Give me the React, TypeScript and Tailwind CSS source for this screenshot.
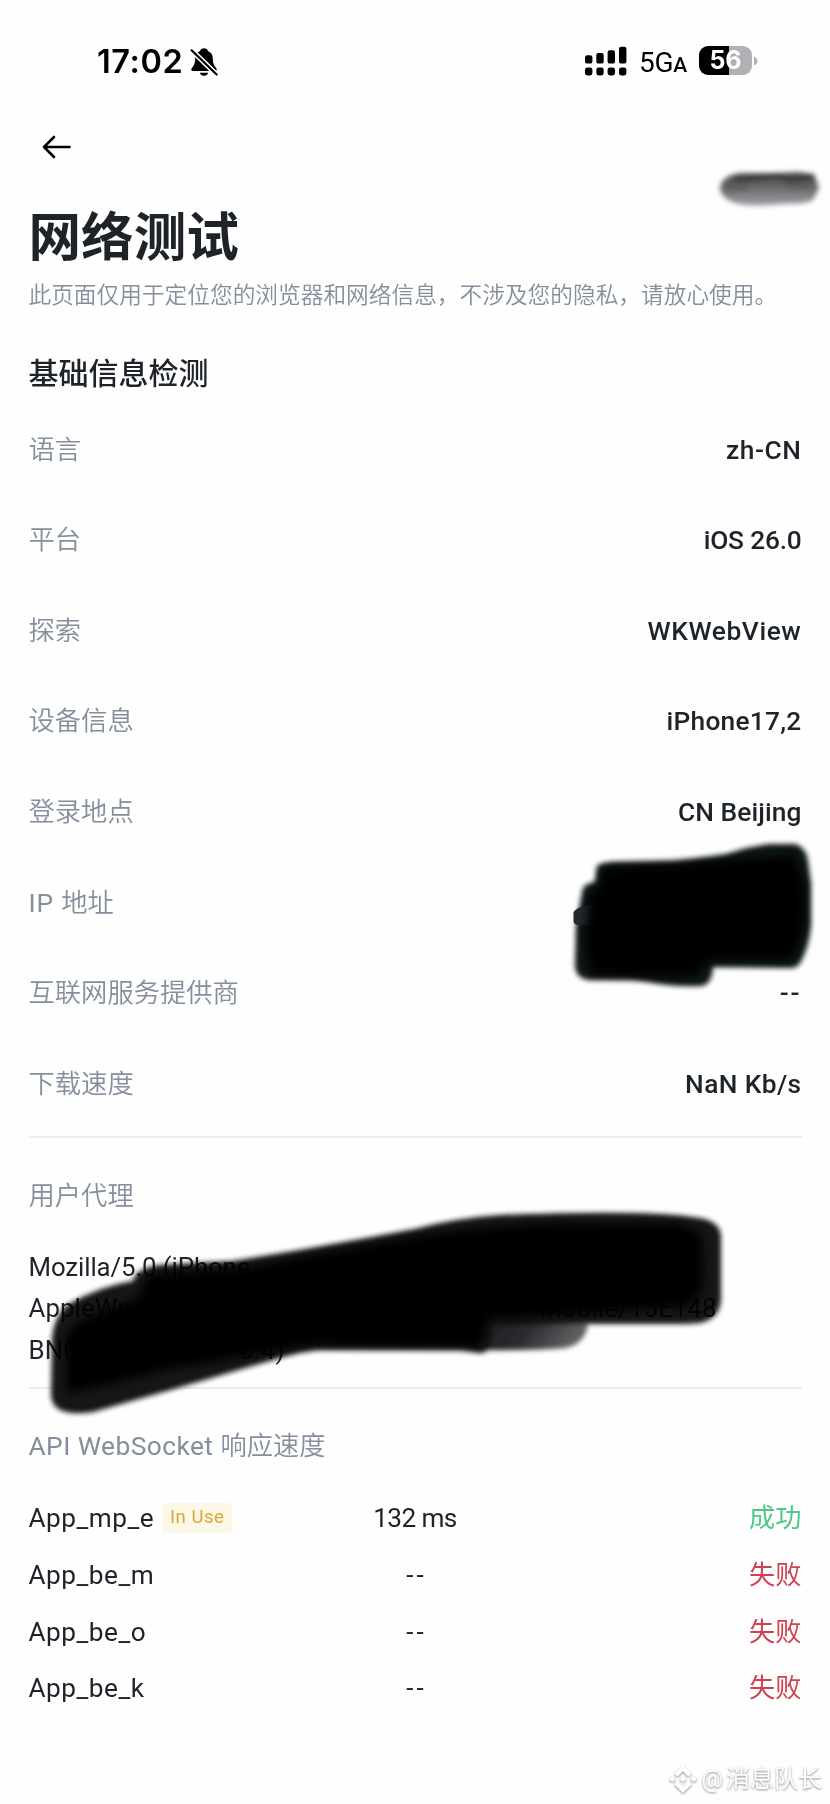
import React from 'react';
import { SiBinance } from 'react-icons/si';

const info = [
  { label: '语言', value: 'zh-CN', tracking: 'tracking-[0.6px]' },
  { label: '平台', value: 'iOS 26.0', tracking: 'tracking-[-0.2px]' },
  { label: '探索', value: 'WKWebView', tracking: 'tracking-[0.6px]' },
  { label: '设备信息', value: 'iPhone17,2', tracking: 'tracking-[0.25px]' },
  { label: '登录地点', value: 'CN Beijing', tracking: 'tracking-[0.1px]' },
  { label: 'IP 地址', value: '', tracking: '' },
  { label: '互联网服务提供商', value: '--', tracking: 'tracking-[2px]' },
  { label: '下载速度', value: 'NaN Kb/s', tracking: 'tracking-[0.4px]' },
];

const sockets = [
  { name: 'App_mp_e', time: '132 ms', ok: true, inUse: true },
  { name: 'App_be_m', time: '--', ok: false, inUse: false },
  { name: 'App_be_o', time: '--', ok: false, inUse: false },
  { name: 'App_be_k', time: '--', ok: false, inUse: false },
];

function SilentBell() {
  return (
    <svg width="28" height="30" viewBox="0 0 28 30" className="ml-[7px] mt-[3px]">
      <path d="M14 1.200c-1.900 0-3.500 1.100-4 2.700-2.900 1.300-4.800 3.900-4.800 7.100 0 5.400-1.200 7.500-3 9.400C.800 21.900.900 24 2.800 24h22.400c1.900 0 2-2.100.6-3.600-1.800-1.900-3-4-3-9.400 0-3.200-1.900-5.800-4.800-7.100-.5-1.600-2.100-2.700-4-2.700z" />
      <path d="M9.800 25.800h8.400c-.5 1.900-2.100 3-4.200 3s-3.700-1.100-4.200-3z" />
      <path d="M1.500 3.200l25 24.300" stroke="#fefefe" strokeWidth="5.200" />
      <path d="M1.600 3.300l25 24.200" stroke="#000" strokeWidth="2.200" strokeLinecap="round" />
    </svg>
  );
}

function Signal() {
  return (
    <svg width="42" height="30" viewBox="0 0 42 30">
      <rect x="0" y="9.200" width="7.400" height="8.400" rx="2.200" />
      <rect x="11.300" y="7" width="7.400" height="10.600" rx="2.200" />
      <rect x="22.600" y="4.200" width="7.400" height="13.400" rx="2.200" />
      <rect x="34" y="0.800" width="7.400" height="16.800" rx="2.200" />
      <rect x="0" y="21.400" width="7.400" height="8" rx="2.400" />
      <rect x="11.300" y="21.400" width="7.400" height="8" rx="2.400" />
      <rect x="22.600" y="21.400" width="7.400" height="8" rx="2.400" />
      <rect x="34" y="21.400" width="7.400" height="8" rx="2.400" />
    </svg>
  );
}

// marker strokes that hide the private values
function Redactions() {
  return (
    <svg className="absolute inset-0 pointer-events-none mix-blend-multiply" width="830" height="1804" viewBox="0 0 830 1804">
      <defs>
        <filter id="soft" x="-10%" y="-20%" width="120%" height="140%">
          <feGaussianBlur stdDeviation="2.800" />
        </filter>
        <filter id="softer" x="-10%" y="-20%" width="120%" height="140%">
          <feGaussianBlur stdDeviation="5" />
        </filter>
        <linearGradient id="smudge" x1="0" y1="0" x2="0" y2="1">
          <stop offset="0" stopColor="#4a4b4d" />
          <stop offset="0.4" stopColor="#626365" />
          <stop offset="0.7" stopColor="#828385" />
          <stop offset="1" stopColor="#a0a2a7" />
        </linearGradient>
        <linearGradient id="lobe" x1="0" y1="0" x2="1" y2="0.300">
          <stop offset="0" stopColor="#17181c" />
          <stop offset="0.600" stopColor="#2a2b2f" />
          <stop offset="1" stopColor="#5d5e60" />
        </linearGradient>
      </defs>

      <g filter="url(#soft)">
        <path fill="url(#smudge)" d="M720 189C720 179 730 174 742 173L775 173L798 172L814 174L819 188L813 200C806 205 790 203 770 205C745 207 723 204 720 189Z" />
        <path fill="none" stroke="#333436" strokeWidth="4.500" strokeLinecap="round" d="M736 180L760 178L778 176L788 180L811 178" />
        <path fill="none" stroke="#5a5b5d" strokeWidth="6" strokeLinecap="round" d="M727 188L745 188M790 186L808 187" />
      </g>

      <g filter="url(#soft)">
        <path fill="#111317" d="M597 866Q601 863 611 862L673 861Q705 858 727 854Q750 846 770 844L796 844Q807 849 808 861L811 884L811 925Q809 948 800 963Q797 968 790 968L713 967Q712 984 702 986Q680 987 660 984Q646 981 633 980L590 980Q576 979 575 966L576 925L583 888Q587 883 595 882Z" />
      </g>
      <path fill="#25282d" d="M600 904Q580 904 573.500 912L573.500 921Q574 925 578 925L600 925Z" />
      <g filter="url(#softer)">
        <path fill="#000" d="M603 868L680 864L740 859L795 855L804 885L804 925L793 960L708 960L697 976L650 977L590 974L585 935L590 893L600 888Z" />
      </g>

      <g filter="url(#soft)">
        <path fill="url(#lobe)" d="M470 1305L588 1315L588 1324Q585 1344 565 1348Q530 1351 480 1350Z" />
        <path fill="#121418" d="M51 1395L52 1337Q55 1314 69 1304Q100 1286 133 1281Q136 1268 160 1265L233 1261L300 1250L367 1238L415 1229Q455 1218 500 1215Q580 1212 633 1213Q680 1214 705 1219Q721 1224 721 1237L721 1299Q720 1319 700 1323Q690 1324 680 1324L590 1324L492 1326Q495 1352 480 1353Q470 1351 460 1350L317 1350Q300 1352 283 1357L167 1391L93 1412Q52 1418 51 1395Z" />
      </g>
      <g filter="url(#softer)">
        <path fill="#000" d="M67 1394L66 1335Q75 1322 92 1316L136 1300L148 1275L240 1269L340 1250L420 1236Q480 1226 560 1223L680 1224L702 1234L703 1290L690 1306L590 1313L488 1320L482 1347L310 1345L165 1370Z" />
      </g>
    </svg>
  );
}

export default function App() {
  return (
    <div className="relative w-[830px] h-[1804px] overflow-hidden bg-[#fefefe] text-[#1e2329] whitespace-nowrap font-['Roboto','Noto_Sans_CJK_SC',sans-serif]">
      <div className="h-[120px] pl-[97px] flex items-center text-black">
        <span className="w-[86px] mt-[5px] font-['Inter',sans-serif] text-[32.500px] font-semibold leading-none tracking-[0.6px]">17:02</span>
        <SilentBell />
        <div className="ml-auto pr-[72px] mt-px flex items-center">
          <Signal />
          <div className="w-[46px] ml-[12px] mt-[4px] flex items-baseline leading-none">
            <span className="text-[28px] font-[450] tracking-[-0.3px]">5G</span>
            <span className="text-[21px] font-medium">A</span>
          </div>
          <div className="ml-[14px] w-[53px] h-[29px] rounded-[9px] bg-[linear-gradient(to_right,#000_57%,#b0b0b5_57%)] flex items-center justify-center font-['Inter',sans-serif] text-[25px] font-bold leading-none text-white">
            56
          </div>
          <svg width="4" height="10" viewBox="0 0 4 10" className="ml-[2px]">
            <path d="M0 0.500C2 1.200 3.400 2.800 3.400 5S2 8.800 0 9.500Z" fill="#b0b0b5" />
          </svg>
        </div>
      </div>

      <div className="h-[54px] pl-[42px] flex items-center">
        <svg width="30" height="24" viewBox="0 0 30 24" fill="none" stroke="#000" strokeWidth="2.600" strokeLinecap="round" strokeLinejoin="round">
          <path d="M27.500 12H2M12 2L2 12L12 22" />
        </svg>
      </div>

      <main className="px-[28.500px]">
        <h1 className="mt-[30px] h-[68px] leading-[68px] text-[52.600px] font-bold">网络测试</h1>
        <p className="mt-[8px] h-[32px] leading-[32px] text-[22.700px] font-[350] text-[#848e9c]">
          此页面仅用于定位您的浏览器和网络信息，不涉及您的隐私，请放心使用。
        </p>
        <h2 className="mt-[42px] h-[40px] leading-[40px] text-[30px] font-medium">基础信息检测</h2>

        <div className="mt-[11px]">
          {info.map((row) => (
            <div key={row.label} className="h-[90.600px] flex items-center justify-between text-[26.300px]">
              {row.label === 'IP 地址' ? (
                <span className="font-[350] text-[#848e9c]">
                  <span className="font-normal tracking-[0.8px]">IP </span>地址
                </span>
              ) : (
                <span className="font-[350] text-[#848e9c]">{row.label}</span>
              )}
              <span className={`font-medium ${row.tracking}`}>{row.value}</span>
            </div>
          ))}
        </div>

        <section className="mt-[6px] border-t-2 border-[#eaecef]">
          <div className="mt-[38px] h-[40px] leading-[40px] text-[26.300px] font-[350] text-[#848e9c]">用户代理</div>
          <div className="mt-[31px] h-[125px] text-[25.800px] leading-[41.600px]">
            <div className="tracking-[-0.1px]">Mozilla/5.0 (iPhone</div>
            <div className="flex justify-between w-[688px] tracking-[0.100px]">
              <span>AppleWe</span>
              <span>Mobile/15E148</span>
            </div>
            <div className="flex justify-between w-[256px] tracking-[0.100px]">
              <span>BNC</span>
              <span>0.4)</span>
            </div>
          </div>
        </section>

        <section className="mt-[15px] border-t-2 border-[#eaecef]">
          <div className="mt-[37px] h-[40px] leading-[40px] text-[26.300px] font-[350] text-[#848e9c]">
            <span className="font-normal tracking-[0.45px]">API WebSocket </span>响应速度
          </div>
          <div className="mt-[25px]">
            {sockets.map((s) => (
              <div key={s.name} className="h-[56.600px] grid grid-cols-3 items-center text-[26.200px]">
                <div className="flex items-center">
                  <span className="tracking-[0.5px]">{s.name}</span>
                  {s.inUse && (
                    <span className="ml-[8px] mb-[3px] w-[70px] h-[30px] rounded-[4px] bg-[#fcf8e6] flex items-center justify-center text-[18.500px] tracking-[0.5px] text-[#d9a838]">
                      In Use
                    </span>
                  )}
                </div>
                <span className={s.ok ? 'text-center tracking-[-0.6px]' : 'text-center tracking-[3px] pl-[3px]'}>{s.time}</span>
                <span className={s.ok ? 'text-right text-[#4cc987]' : 'text-right text-[#cf4050]'}>
                  {s.ok ? '成功' : '失败'}
                </span>
              </div>
            ))}
          </div>
        </section>
      </main>

      <Redactions />

      <div className="absolute right-[8px] bottom-[9px] h-[32px] flex items-center text-white text-[24px] [filter:drop-shadow(0_1px_1px_#85888e)]">
        <SiBinance className="w-[28px] h-[28px]" />
        <span className="ml-[4px]">@</span>
        <span className="ml-[3px]">消息队长</span>
      </div>
    </div>
  );
}
